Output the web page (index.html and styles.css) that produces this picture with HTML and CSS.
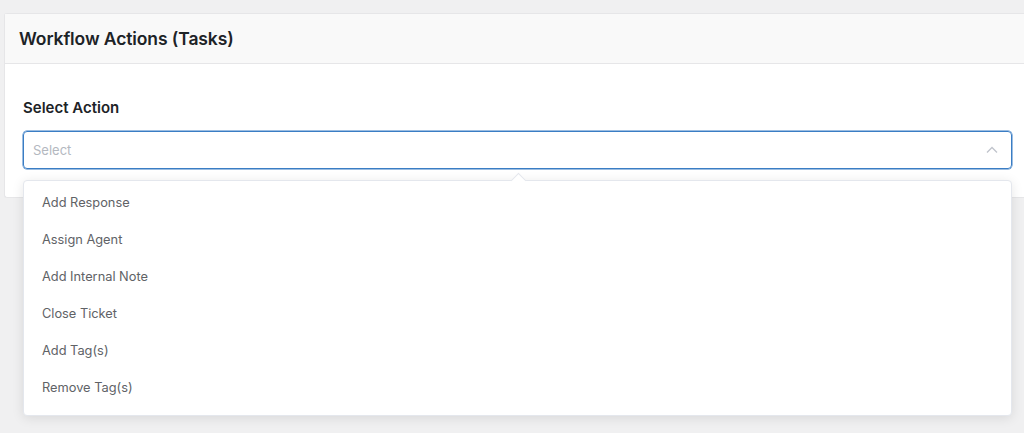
FILE: index.html
```html
<!DOCTYPE html>
<html lang="en">
<head>
  <meta charset="UTF-8">
  <meta name="viewport" content="width=device-width, initial-scale=1">
  <title>Workflow Actions</title>
  <link rel="stylesheet" href="styles.css">
</head>
<body>

<div class="page">
  <div class="card">
    <div class="card-header">Workflow Actions (Tasks)</div>
    <div class="card-body">
      <label class="field-label">Select Action</label>
      <div class="select">
        <div class="select-input">
          <span class="placeholder">Select</span>
          <svg class="chevron" width="12" height="8" viewBox="0 0 12 8">
            <path d="M1 6.5 L6 1.5 L11 6.5" fill="none" stroke="#c0c4cc" stroke-width="1.3"/>
          </svg>
        </div>
        <ul class="dropdown">
          <li>Add Response</li>
          <li>Assign Agent</li>
          <li>Add Internal Note</li>
          <li>Close Ticket</li>
          <li>Add Tag(s)</li>
          <li>Remove Tag(s)</li>
        </ul>
      </div>
    </div>
  </div>
</div>

</body>
</html>
```

FILE: styles.css
```css
* { box-sizing: border-box; }
html, body {
  height: 100%;
}
body {
  margin: 0;
  background: #f0f0f1;
  font-family: Inter, "Noto Sans", sans-serif;
  color: #1d2327;
}
.page {
  min-height: 100%;
  padding: 13px 0 0 4px;
}
.card {
  background: #fff;
  border: 1px solid #e6e6e8;
  border-right: none;
  border-radius: 3px 0 0 3px;
}
.card-header {
  height: 50px;
  display: flex;
  align-items: center;
  padding-left: 14px;
  background: #f9f9f9;
  border-bottom: 1px solid #e6e6e8;
  font-size: 17.5px;
  font-weight: 600;
  letter-spacing: -0.1px;
}
.card-body {
  padding: 34px 12px 28px 18px;
}
.field-label {
  display: block;
  font-size: 15px;
  font-weight: 600;
  margin-bottom: 14px;
}
.select {
  position: relative;
}
.select-input {
  height: 38px;
  border: 1px solid #3a7dc4;
  box-shadow: 0 0 0 0.5px #3a7dc4;
  border-radius: 4px;
  display: flex;
  align-items: center;
  justify-content: space-between;
  padding: 0 13px 0 9px;
}
.placeholder {
  font-size: 13px;
  color: #b4b8bf;
}
.dropdown {
  position: absolute;
  top: 49px;
  left: 0;
  right: 0;
  margin: 0;
  padding: 3px 0 9px;
  list-style: none;
  background: #fff;
  border: 1px solid #e4e7ed;
  border-radius: 4px;
  box-shadow: 0 2px 12px rgba(0, 0, 0, 0.1);
  z-index: 10;
}
.dropdown::before {
  content: "";
  position: absolute;
  top: -6px;
  left: 489px;
  width: 10px;
  height: 10px;
  background: #fff;
  border-left: 1px solid #e4e7ed;
  border-top: 1px solid #e4e7ed;
  transform: rotate(45deg);
}
.dropdown li {
  height: 37px;
  line-height: 37px;
  padding-left: 18px;
  font-size: 12.8px;
  color: #606266;
}
```
